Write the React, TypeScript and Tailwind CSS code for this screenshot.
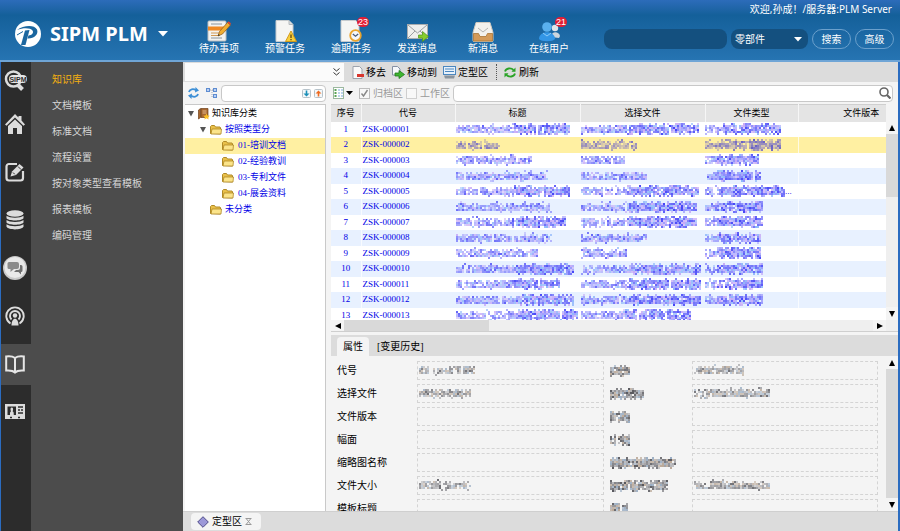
import { useState } from 'react';
import type { ReactNode } from 'react';
import { clsx } from 'clsx';

type Tone = 'blue' | 'violet' | 'gray';

const tones: Record<Tone, string[]> = {
  blue: ['#3c3cf6', '#5454f8', '#6a6afa', '#8686fb', '#a5a2fc', '#c3a4f6', '#86b2fa'],
  violet: ['#5c55c8', '#7a70c4', '#9186c0', '#aa9cb8', '#c4b6b0'],
  gray: ['#4e4e54', '#6c6c72', '#8b8b90', '#a8a8ac', '#b7a594', '#94a8bf'],
};

// Censored text: small blocks of uneven strength, heavier after `dense` (0..1)
function Mosaic({ width, seed, tone = 'blue', dense = 0.5 }: { width: number; seed: number; tone?: Tone; dense?: number }) {
  const colors = tones[tone];
  const cells: ReactNode[] = [];
  let s = seed * 7919 + 17;
  const rand = () => {
    s = (s * 16807) % 2147483647;
    return s / 2147483647;
  };
  rand();
  for (let x = 0; x < width; x += 2) {
    const heavy = x / width >= dense;
    const gap = rand() < (heavy ? 0.03 : 0.08);
    for (let y = 0; y < 12; y += 2) {
      const edge = y === 0 || y === 10;
      const chance = gap ? 0.2 : edge ? (heavy ? 0.4 : 0.06) : heavy ? 0.95 : y === 2 ? 0.55 : 0.9;
      const hit = rand() < chance;
      const pick = Math.floor(rand() * colors.length);
      const strength = (heavy ? 0.6 : 0.45) + rand() * 0.35;
      if (hit) {
        cells.push(<rect key={`${x}-${y}`} x={x} y={y} width="2" height="2" fill={colors[pick]} fillOpacity={strength} />);
      }
    }
  }
  return (
    <svg width={width} height="12" viewBox={`0 0 ${width} 12`} className="block shrink-0" aria-hidden="true">
      {cells}
    </svg>
  );
}

/* ---------- header ---------- */

function Logo() {
  return (
    <svg width="28" height="28" viewBox="0 0 28 28" aria-hidden="true">
      <circle cx="14" cy="14" r="13" fill="#fff" />
      <path d="M3 10C9 5.500 20 4 23 9.500C25 14.500 19.500 19 13.500 18.500L14.500 15.500C18 15.500 20 12.500 18.500 10.500C16.500 7.500 9 7.500 3 10Z" fill="#1b669f" />
      <path d="M11 10.500L15.500 10L11.500 25L7 25Z" fill="#1b669f" />
      <path d="M3 15L9 11.500" stroke="#1b669f" strokeWidth="1" />
    </svg>
  );
}

function TodoIcon() {
  return (
    <svg width="24" height="22" viewBox="0 0 24 22">
      <rect x="1" y="1" width="18" height="20" rx="1" fill="#f3f3f1" stroke="#b9bdc0" />
      <path d="M4 4h11M4 18h11" stroke="#8c969e" />
      <rect x="1" y="6.500" width="18" height="4" fill="#f08a24" />
      <path d="M4 13h10M4 15.500h8" stroke="#d19955" />
      <path d="M11 16l1.500-4.500L20.500 2.500l3 2.500-8 9z" fill="#f0ae32" stroke="#8b5a1d" strokeWidth=".7" />
      <path d="M20.500 2.500l1.200-1.300 2.300 2.200-1 1.600z" fill="#dc4632" />
      <path d="M11 16l.6-2 1.400 1.200z" fill="#333" />
    </svg>
  );
}

function WarnIcon() {
  return (
    <svg width="24" height="22" viewBox="0 0 24 22">
      <path d="M3 .5h13l4 4v17H3z" fill="#f5f5f3" stroke="#c6cbce" />
      <path d="M16 .5v4h4" fill="#d9dcde" stroke="#b5babd" />
      <path d="M18 11l5.500 10.500h-11z" fill="#f8cf3c" stroke="#d29a1c" strokeLinejoin="round" />
      <path d="M18 14.500v3.500M18 19v1.300" stroke="#5c4611" strokeWidth="1.300" />
    </svg>
  );
}

function OverdueIcon() {
  return (
    <svg width="24" height="22" viewBox="0 0 24 22">
      <path d="M2 .5h15l3 4v17H2z" fill="#f5f5f3" stroke="#c6cbce" />
      <circle cx="16.500" cy="15.500" r="5.300" fill="#f4f7fb" stroke="#eba52e" strokeWidth="1.800" />
      <path d="M13.800 14l2.700 2.200 2.700-2.200" fill="none" stroke="#4a5a78" strokeWidth="1.300" />
    </svg>
  );
}

function SendIcon() {
  return (
    <svg width="24" height="22" viewBox="0 0 24 22">
      <rect x="2.500" y="4.500" width="20" height="14" fill="#efefed" stroke="#a9adb0" />
      <path d="M3 5l9.500 8L22 5M3 18l7-7M22 18l-7-7" fill="none" stroke="#9b9fa2" />
      <path d="M13.500 15h4v-3.500l6 5-6 5V18h-4z" fill="#86cc2c" stroke="#4f9416" strokeWidth=".7" />
    </svg>
  );
}

function InboxIcon() {
  return (
    <svg width="24" height="22" viewBox="0 0 24 22">
      <path d="M5 2.500h14l3 10v8a1 1 0 0 1-1 1H3a1 1 0 0 1-1-1v-8z" fill="#f3f1ec" stroke="#cfc9bf" />
      <path d="M2.500 13.500h5l1.500 3h6l1.500-3h5v7.500h-19z" fill="#d49a58" stroke="#ab7636" strokeWidth=".8" />
      <path d="M7 8l5 4 5-4" fill="none" stroke="#b3b3b0" />
    </svg>
  );
}

function UsersIcon() {
  return (
    <svg width="24" height="22" viewBox="0 0 24 22">
      <circle cx="18" cy="8" r="3.200" fill="#dfe5ea" />
      <path d="M14 17c0-6 8-6 9-1l-1 2z" fill="#cdd6de" />
      <circle cx="10" cy="7" r="4.800" fill="#5ab0ee" />
      <path d="M2 19c0-9 16-9 16 0-2 3-14 3-16 0z" fill="#3396e6" />
      <path d="M6 13l4 3 4-3" fill="none" stroke="#8dcbf8" />
    </svg>
  );
}

const actions: { label: string; icon: ReactNode; badge?: number }[] = [
  { label: '待办事项', icon: <TodoIcon /> },
  { label: '预警任务', icon: <WarnIcon /> },
  { label: '逾期任务', icon: <OverdueIcon />, badge: 23 },
  { label: '发送消息', icon: <SendIcon /> },
  { label: '新消息', icon: <InboxIcon /> },
  { label: '在线用户', icon: <UsersIcon />, badge: 21 },
];

function Header() {
  return (
    <header className="flex h-[62px] shrink-0 border-b-2 border-[#6fa5d6] bg-linear-to-b from-[#2c6cba] via-[#14609a] via-25% to-[#2674b2] text-white">
      <div className="flex w-[186px] shrink-0 items-center pt-2 pl-[14px]">
        <Logo />
        <h1 className="pl-2 font-['Noto_Sans',sans-serif] text-[20px] leading-6 font-bold whitespace-nowrap">SIPM PLM</h1>
        <button aria-label="切换系统" className="pl-2.5">
          <svg width="10" height="6" viewBox="0 0 10 6">
            <path d="M0 0h10L5 5.500z" fill="#fff" />
          </svg>
        </button>
      </div>
      <nav className="flex pt-5">
        {actions.map((a) => (
          <button key={a.label} className="flex w-[66px] flex-col items-center">
            <span className="relative">
              {a.icon}
              {a.badge && (
                <span className="absolute -top-[3px] -right-[6px] flex h-[10px] w-3 items-center justify-center rounded-full bg-[#e21f35] font-['Liberation_Sans',sans-serif] text-[9px] leading-none">
                  {a.badge}
                </span>
              )}
            </span>
            <span className="text-[10px] leading-[14px]">{a.label}</span>
          </button>
        ))}
      </nav>
      <div className="ml-auto flex flex-col items-end pr-[6px]">
        <p className="pt-px pr-0.5 font-['Noto_Sans','Noto_Sans_CJK_SC',sans-serif] text-[10px] leading-4">欢迎,孙成！/服务器:PLM Server</p>
        <div className="flex items-center gap-1 pt-3 text-[10px]">
          <input aria-label="搜索内容" className="h-5 w-[123px] rounded-lg bg-[#14507f] px-2 outline-none" />
          <span className="relative flex">
            <select aria-label="搜索类型" className="h-5 w-[77px] appearance-none rounded-lg bg-[#14507f] pl-1 outline-none">
              <option>零部件</option>
            </select>
            <svg width="8" height="5" viewBox="0 0 8 5" className="pointer-events-none absolute top-2 right-[6px]">
              <path d="M0 0h8L4 4.500z" fill="#fff" />
            </svg>
          </span>
          <button className="h-5 w-[39px] rounded-full border border-[#6ba0cc]">搜索</button>
          <button className="h-5 w-[39px] rounded-full border border-[#6ba0cc]">高级</button>
        </div>
      </div>
    </header>
  );
}

/* ---------- left rail ---------- */

function SearchLogoIcon() {
  return (
    <svg width="24" height="22" viewBox="0 0 24 22">
      <circle cx="9.500" cy="9" r="7.500" fill="none" stroke="#dcdcdc" strokeWidth="2.500" />
      <path d="M13.500 14.500l5 5" stroke="#dcdcdc" strokeWidth="4" />
      <rect x="5" y="5" width="18" height="8" rx="4" fill="#e6e6e6" />
      <text x="14" y="11.500" textAnchor="middle" fontSize="7" fontWeight="bold" fill="#2c2c2c" fontFamily="Liberation Sans, sans-serif">
        SIPM
      </text>
    </svg>
  );
}

const railIcons: { label: string; icon: ReactNode }[] = [
  {
    label: '首页',
    icon: (
      <svg width="20" height="20" viewBox="0 0 20 20" fill="#dcdcdc">
        <path d="M10 0l3.500 3.500V2h3v4.500L20 10.500l-1.500 1.200L10 3.500 1.500 11.700 0 10.500z" />
        <path d="M10 5.500l7 6.500v8h-5v-6H8v6H3v-8z" />
      </svg>
    ),
  },
  {
    label: '编辑',
    icon: (
      <svg width="20" height="20" viewBox="0 0 20 20" fill="none">
        <path d="M12 2H4a2.500 2.500 0 0 0-2.500 2.500v11.500A2.500 2.500 0 0 0 4 18.500h11.500a2.500 2.500 0 0 0 2.500-2.500V9" stroke="#dcdcdc" strokeWidth="2.200" />
        <path d="M5.500 14.500l1.500-5L14.500 2l4 3.500L11 13z" fill="#dcdcdc" />
        <path d="M8 10.500l1.800 1.800M13 4.500l3 3" stroke="#2c2c2c" />
      </svg>
    ),
  },
  {
    label: '数据库',
    icon: (
      <svg width="18" height="20" viewBox="0 0 18 20" fill="#dcdcdc">
        <ellipse cx="9" cy="3.500" rx="8.500" ry="3.200" />
        <path d="M.5 5.700c3 2.600 14 2.600 17 0v2.500c-2 3-15 3-17 0zM.5 10c3 2.600 14 2.600 17 0v2.500c-2 3-15 3-17 0zM.5 14.300c3 2.600 14 2.600 17 0v2.500c-2 3.500-15 3.500-17 0z" />
      </svg>
    ),
  },
  {
    label: '消息',
    icon: (
      <svg width="24" height="24" viewBox="0 0 24 24">
        <circle cx="12" cy="12" r="12" fill="#c9c9c9" />
        <circle cx="12" cy="11.500" r="10.500" fill="#e9e9e9" />
        <path d="M6 6h8a2 2 0 0 1 2 2v3a2 2 0 0 1-2 2h-3l-3.500 3v-3H6a1.500 1.500 0 0 1-1.500-1.500v-4A1.500 1.500 0 0 1 6 6z" fill="#8b8b8b" />
        <path d="M17 9h1a1.500 1.500 0 0 1 1.500 1.500v4A1.500 1.500 0 0 1 18 16v2.500L15.500 16H11l2-2h2a2 2 0 0 0 2-2z" fill="#6e6e6e" />
      </svg>
    ),
  },
  {
    label: '广播',
    icon: (
      <svg width="20" height="20" viewBox="0 0 20 20" fill="none" stroke="#dcdcdc" strokeWidth="1.900">
        <path d="M5.500 17.500a8.700 8.700 0 1 1 9 0" />
        <path d="M6.500 13.500a5 5 0 1 1 7 0" />
        <circle cx="10" cy="9.500" r="2.200" fill="#dcdcdc" stroke="none" />
        <path d="M6.500 19.500c0-9 7-9 7 0z" fill="#dcdcdc" stroke="none" />
      </svg>
    ),
  },
  {
    label: '知识库',
    icon: (
      <svg width="20" height="19" viewBox="0 0 20 19" fill="none" stroke="#e6e6e6" strokeWidth="2">
        <path d="M1.200 1.500C5 1 8 1.500 10 3c2-1.500 5-2 8.800-1.500v14c-4-.3-7 .2-8.800 2-1.800-1.800-4.800-2.300-8.800-2zM10 3v14" />
      </svg>
    ),
  },
  {
    label: '证件',
    icon: (
      <svg width="20" height="16" viewBox="0 0 20 16">
        <rect width="20" height="15" fill="#dcdcdc" />
        <rect x="2.500" y="2.500" width="8.500" height="8.500" fill="#2c2c2c" />
        <path d="M5 11c0-3 .2-3 1-3.500C5 5 5.500 3.500 6.800 3.500S8.500 5 7.700 7.500C8.500 8 8.800 8 8.800 11z" fill="#dcdcdc" />
        <path d="M13 3h5M13 6h2M16 6h2M13 9h5M5 13.500h2M13 13.500h2" stroke="#2c2c2c" strokeWidth="1.300" />
      </svg>
    ),
  },
];

const menu = ['知识库', '文档模板', '标准文档', '流程设置', '按对象类型查看模板', '报表模板', '编码管理'];

function Sidebar() {
  return (
    <>
      <nav className="flex w-[31px] shrink-0 flex-col border-l border-[#2b6cc0] bg-[#2c2c2c]">
        <button aria-label="SIPM" className="flex h-[38px] items-center justify-center">
          <SearchLogoIcon />
        </button>
        {railIcons.map((item) => (
          <div key={item.label} className="flex h-12 items-center">
            <button
              aria-label={item.label}
              className={clsx('flex h-[41px] w-full items-center justify-center pr-0.5', item.label === '知识库' && 'bg-[#4c4c4c]')}
            >
              {item.icon}
            </button>
          </div>
        ))}
      </nav>
      <nav className="w-[152px] shrink-0 bg-[#4c4c4c] pt-1 pl-[21px] text-[10px]">
        {menu.map((m, i) => (
          <a key={m} href="#" className={clsx('flex h-[26px] items-center', i === 0 ? 'text-[#f5b010]' : 'text-[#d6d6d6]')}>
            {m}
          </a>
        ))}
      </nav>
    </>
  );
}

/* ---------- toolbars ---------- */

function Toolbar() {
  return (
    <div className="flex h-5 shrink-0 items-center bg-[#dcdcdc] text-[10px]">
      <button aria-label="选择分类" className="ml-0.5 flex h-[18px] w-[159px] items-center justify-end bg-[#fbfbfb] pr-1">
        <svg width="7" height="8" viewBox="0 0 7 8" fill="none" stroke="#333">
          <path d="M.5 .5l3 2.500 3-2.500M.5 4.500l3 2.500 3-2.500" />
        </svg>
      </button>
      <button className="flex items-center gap-0.5 pl-2">
        <svg width="12" height="13" viewBox="0 0 12 13">
          <path d="M1 .5h6.500L10 3v9.500H1z" fill="#fafafa" stroke="#9da3ad" />
          <rect x="5" y="8" width="7" height="3" fill="#d8362e" />
        </svg>
        移去
      </button>
      <button className="flex items-center gap-0.5 pl-[6px]">
        <svg width="13" height="13" viewBox="0 0 13 13">
          <path d="M.5 .5h5L8 3v6H.5z" fill="#f6f8fb" stroke="#8590a5" />
          <path d="M3 7h4V4.500L12.500 8.500 7 12.500V10H3z" fill="#3fb52f" stroke="#1e7a1a" strokeWidth=".8" />
        </svg>
        移动到
      </button>
      <button className="flex items-center gap-0.5 pl-[6px]">
        <svg width="13" height="13" viewBox="0 0 13 13">
          <rect x=".5" y=".5" width="12" height="8" fill="#e7f1fb" stroke="#4b87c0" />
          <path d="M2 3h9M2 5.500h9" stroke="#4b87c0" />
          <path d="M1 9.500h11l-1 3H2z" fill="#8a949e" />
        </svg>
        定型区
      </button>
      <span className="ml-2 h-4 border-l border-dotted border-[#555]" />
      <button className="flex items-center gap-[3px] pl-[7px]">
        <svg width="12" height="11" viewBox="0 0 12 11" fill="none" stroke="#2aa327" strokeWidth="1.800">
          <path d="M1 4.500C2 1 7 .5 9.500 3M11 6.500C10 10 5 10.500 2.500 8" />
          <path d="M11.500 .5v4.300h-4zM.5 10.500V6.200h4z" fill="#2aa327" stroke="none" />
        </svg>
        刷新
      </button>
    </div>
  );
}

function ArrowBox({ color, up }: { color: string; up?: boolean }) {
  return (
    <svg width="9" height="9" viewBox="0 0 9 9">
      <rect x=".5" y=".5" width="8" height="8" rx="1" fill="#f4f8fa" stroke="#b7c3ca" />
      <path d={up ? 'M4.500 1.500L7.500 4.500H5.300V7.500H3.700V4.500H1.500z' : 'M4.500 7.500L7.500 4.500H5.300V1.500H3.700V4.500H1.500z'} fill={color} />
    </svg>
  );
}

function TreeSearch() {
  return (
    <div className="flex h-[22px] shrink-0 items-center pl-[3px]">
      <button aria-label="刷新分类">
        <svg width="11" height="12" viewBox="0 0 11 12" fill="none" stroke="#3d8fd6" strokeWidth="1.800">
          <path d="M1 5C1.500 2 5.500 1.500 8 3.200M10 7C9.500 10 5.500 10.500 3 8.800" />
          <path d="M7.500 0L11 3.500 7 5.500zM3.500 12L0 8.500 4 6.500z" fill="#3d8fd6" stroke="none" />
        </svg>
      </button>
      <button aria-label="展开层级" className="pl-[7px]">
        <svg width="12" height="11" viewBox="0 0 12 11" fill="#b9d0f5" stroke="#5e8cd0">
          <path d="M4 2h3M6 2v7h2" stroke="#a0a8b8" fill="none" strokeDasharray="1 1" />
          <rect x=".5" y=".5" width="3" height="3" />
          <rect x="7.500" y=".5" width="3" height="3" />
          <rect x="7.500" y="6.500" width="3" height="3" />
        </svg>
      </button>
      <div className="ml-[3px] flex h-[17px] min-w-0 flex-1 items-center gap-[3px] rounded-sm border border-[#c8c8c8] bg-white pr-0.5">
        <input aria-label="分类搜索" className="h-full min-w-0 flex-1 px-1 text-[9px] outline-none" />
        <button aria-label="向下查找">
          <ArrowBox color="#1b8fb8" />
        </button>
        <button aria-label="向上查找">
          <ArrowBox color="#ee6a20" up />
        </button>
      </div>
    </div>
  );
}

function ListSearch() {
  return (
    <div className="flex h-[22px] shrink-0 items-center pr-[5px] pl-0.5 text-[10px] text-[#9a9a9a]">
      <button aria-label="视图" className="flex items-center gap-0.5">
        <svg width="11" height="12" viewBox="0 0 11 12">
          <rect x=".5" y=".5" width="10" height="11" fill="#fff" stroke="#9cb8a0" />
          <path d="M2.500 2v8" stroke="#5aa456" strokeWidth="2" strokeDasharray="2 1" />
          <path d="M5 3h5M5 6h5M5 9h5" stroke="#79a9d8" strokeDasharray="2 1" />
        </svg>
        <svg width="7" height="4" viewBox="0 0 7 4">
          <path d="M0 0h7L3.500 4z" />
        </svg>
      </button>
      <label className="flex items-center gap-[3px] pl-[6px]">
        <span className="relative flex">
          <input type="checkbox" defaultChecked className="peer size-[11px] appearance-none border border-[#bdbdbd] bg-[#f8f8f8]" />
          <svg width="9" height="9" viewBox="0 0 9 9" className="pointer-events-none absolute top-px left-px hidden peer-checked:block">
            <path d="M1.500 4.500l2 2.500 4-6" fill="none" stroke="#888" strokeWidth="1.400" />
          </svg>
        </span>
        归档区
      </label>
      <label className="flex items-center gap-[3px] pl-[3px]">
        <input type="checkbox" className="size-[11px] appearance-none border border-[#cfcfcf] bg-[#f8f8f8]" />
        工作区
      </label>
      <div className="ml-[3px] flex h-[17px] min-w-0 flex-1 items-center rounded-sm border border-[#c8c8c8] bg-white pr-px">
        <input aria-label="列表搜索" className="h-full min-w-0 flex-1 px-1 text-black outline-none" />
        <button aria-label="查找">
          <svg width="12" height="12" viewBox="0 0 12 12" fill="none" stroke="#666">
            <circle cx="5" cy="5" r="4" strokeWidth="1.600" />
            <path d="M8 8l3.500 3.500" strokeWidth="2.200" />
          </svg>
        </button>
      </div>
    </div>
  );
}

/* ---------- tree ---------- */

function Folder() {
  return (
    <svg width="12" height="10" viewBox="0 0 12 10">
      <path d="M.5 8.500V1.500l1-1h3l1 1.500h4.500l.5 1v6z" fill="#e9c04a" stroke="#b08a28" />
      <path d="M1 9l1-5h9.500L11 9z" fill="#fbe48a" stroke="#a67c17" strokeWidth=".7" />
    </svg>
  );
}

function Caret() {
  return (
    <svg width="6" height="6" viewBox="0 0 6 6">
      <path d="M0 0h6L3 5.500z" fill="#555" />
    </svg>
  );
}

const leaves = ['01-培训文档', '02-经验教训', '03-专利文件', '04-展会资料'];

function Tree() {
  const [selected, setSelected] = useState(leaves[0]);

  return (
    <div className="min-h-0 flex-1 overflow-hidden border-t border-r border-[#c9c9c9] bg-white pt-px text-[9px] whitespace-nowrap text-[#0000e6]">
      <button className="flex h-4 w-full items-center pl-[3px] text-black">
        <Caret />
        <svg width="12" height="12" viewBox="0 0 12 12" className="mr-0.5 ml-1">
          <path d="M.5 2l2-1.500v9L.5 11zM3 .5h7v9H3z" fill="#a8672f" stroke="#6e3f18" strokeWidth=".7" />
          <path d="M4.500 3h4M4.500 5h4" stroke="#e3b98c" />
          <path d="M8.500 5.500l1 2 2.300.2-1.700 1.500.6 2.300-2.200-1.200-2.100 1.200.5-2.300-1.700-1.500 2.300-.2z" fill="#fbbf24" />
        </svg>
        知识库分类
      </button>
      <button className="flex h-4 w-full items-center pl-[15px]">
        <Caret />
        <span className="mr-[3px] ml-1">
          <Folder />
        </span>
        按照类型分
      </button>
      {leaves.map((leaf) => (
        <button
          key={leaf}
          onClick={() => setSelected(leaf)}
          className={clsx('flex h-4 w-full items-center gap-1 pl-[37px]', leaf === selected && 'bg-[#fff0a2]')}
        >
          <Folder />
          {leaf}
        </button>
      ))}
      <button className="flex h-4 w-full items-center gap-[3px] pl-[25px]">
        <Folder />
        未分类
      </button>
    </div>
  );
}

/* ---------- list ---------- */

// widths of the three censored columns: title, file, type
const rows: [number, number, number][] = [
  [114, 118, 76],
  [44, 56, 76],
  [76, 44, 56],
  [92, 66, 56],
  [114, 118, 80],
  [96, 116, 58],
  [110, 116, 58],
  [96, 66, 56],
  [82, 46, 56],
  [118, 120, 58],
  [104, 120, 58],
  [118, 120, 58],
  [122, 110, 0],
];

const columns = ['序号', '代号', '标题', '选择文件', '文件类型', '文件版本'];

function Arrow({ dir }: { dir: 'up' | 'down' | 'left' | 'right' }) {
  const d = { up: 'M0 6h6L3 0z', down: 'M0 0h6L3 6z', left: 'M6 0v6L0 3z', right: 'M0 0v6l6-3z' }[dir];
  return (
    <svg width="6" height="6" viewBox="0 0 6 6">
      <path d={d} />
    </svg>
  );
}

function VScroll({ thumb }: { thumb: string }) {
  return (
    <div className="flex w-3 shrink-0 flex-col bg-[#efefef]">
      <button aria-label="向上滚动" className="flex h-[13px] items-center justify-center bg-[#f4f4f4]">
        <Arrow dir="up" />
      </button>
      <div className="min-h-0 flex-1">
        <div className={clsx('bg-[#d9d9d9]', thumb)} />
      </div>
      <button aria-label="向下滚动" className="flex h-[13px] items-center justify-center bg-[#f4f4f4]">
        <Arrow dir="down" />
      </button>
    </div>
  );
}

function DocumentList() {
  const [active, setActive] = useState(1);

  return (
    <section className="flex h-[228px] shrink-0 flex-col border-b border-[#cfcfcf]">
      <div className="flex min-h-0 flex-1">
        <div className="min-w-0 flex-1 overflow-hidden bg-white">
          <table className="h-[219px] w-full min-w-[594px] table-fixed text-[9px] leading-[15px]">
            <colgroup>
              <col className="w-[30px]" />
              <col className="w-[94px]" />
              <col className="w-[125px]" />
              <col className="w-[125px]" />
              <col className="w-[93px]" />
              <col />
            </colgroup>
            <thead>
              <tr className="h-[17px] bg-[#e4e4e4]">
                {columns.map((c) => (
                  <th key={c} className="h-[17px] border-t border-r border-t-[#cfcfcf] border-r-[#f6f6f6] p-0 font-normal">
                    {c}
                  </th>
                ))}
              </tr>
            </thead>
            <tbody className="text-[#0000e6]">
              {rows.map(([title, file, type], i) => (
                <tr
                  key={i}
                  onClick={() => setActive(i)}
                  className={clsx(i === active ? 'bg-[#fff0a2]' : i % 2 ? 'bg-[#e8f1ff]' : 'bg-white')}
                >
                  <td className="border-r border-white/70 p-0 text-center">{i + 1}</td>
                  <td className="p-0 pl-px">ZSK-{String(i + 1).padStart(6, '0')}</td>
                  <td className="p-0 pl-px">
                    <Mosaic width={title} seed={i * 3 + 1} tone={i === 1 ? 'violet' : 'blue'} dense={title > 100 ? 0.5 : 1} />
                  </td>
                  <td className="p-0 pl-px">
                    <Mosaic width={file} seed={i * 3 + 2} tone={i === 1 ? 'violet' : 'blue'} dense={file > 100 ? 0.4 : 1} />
                  </td>
                  <td className="border-r border-white/70 p-0">
                    {type > 0 && (
                      <span className="flex items-center">
                        <Mosaic width={type} seed={i * 3 + 3} tone={i === 1 ? 'violet' : 'blue'} dense={0.2} />
                        {i === 4 && '...'}
                      </span>
                    )}
                  </td>
                  <td className="p-0" />
                </tr>
              ))}
            </tbody>
          </table>
        </div>
        <div className="flex pt-[17px]">
          <VScroll thumb="h-[63px]" />
        </div>
      </div>
      <div className="flex h-[11px] shrink-0 items-center bg-[#efefef] pr-3">
        <button aria-label="向左滚动" className="flex h-full w-[13px] items-center justify-center bg-[#f4f4f4]">
          <Arrow dir="left" />
        </button>
        <div className="h-full flex-1">
          <div className="h-full w-[145px] bg-[#d9d9d9]" />
        </div>
        <button aria-label="向右滚动" className="flex h-full w-[13px] items-center justify-center bg-[#f4f4f4]">
          <Arrow dir="right" />
        </button>
      </div>
    </section>
  );
}

/* ---------- properties ---------- */

// value / other label / other value are censored, given as widths
const fields: { label: string; value: number; other: number; otherValue: number }[] = [
  { label: '代号', value: 56, other: 20, otherValue: 50 },
  { label: '选择文件', value: 52, other: 34, otherValue: 76 },
  { label: '文件版本', value: 0, other: 20, otherValue: 0 },
  { label: '幅面', value: 0, other: 20, otherValue: 0 },
  { label: '缩略图名称', value: 0, other: 66, otherValue: 0 },
  { label: '文件大小', value: 52, other: 58, otherValue: 76 },
  { label: '模板标题', value: 0, other: 18, otherValue: 0 },
];

function CensoredField({ id, width, seed }: { id: string; width: number; seed: number }) {
  return (
    <div className="relative min-w-0">
      <input id={id} readOnly className="block h-[19px] w-full border border-dashed border-[#d4d4d4] bg-[#f4f4f4] outline-none" />
      {width > 0 && (
        <span className="pointer-events-none absolute top-[3px] left-0.5">
          <Mosaic width={width} seed={seed} tone="gray" dense={1} />
        </span>
      )}
    </div>
  );
}

function Properties() {
  return (
    <section className="mt-[3px] flex min-h-0 flex-1 flex-col">
      <div className="flex h-[21px] shrink-0 items-end bg-[#dcdcdc] pl-[6px] text-[10px]">
        <button className="h-[19px] w-8 rounded-t-sm bg-[#f4f4f4]">属性</button>
        <button className="h-[19px] pl-2">[变更历史]</button>
      </div>
      <div className="flex min-h-0 flex-1">
        <form className="min-w-0 flex-1 overflow-hidden pt-[3px] pr-2 pl-[6px] text-[10px]">
          {fields.map((f, i) => (
            <div key={f.label} className="grid h-[23px] grid-cols-[80px_1fr_88px_1fr] items-center">
              <label htmlFor={`field-${i}`}>{f.label}</label>
              <CensoredField id={`field-${i}`} width={f.value} seed={i + 60} />
              <label htmlFor={`other-${i}`} aria-label={`字段${i + 1}`} className="pl-[6px]">
                <Mosaic width={f.other} seed={i + 80} tone="gray" dense={0} />
              </label>
              <CensoredField id={`other-${i}`} width={f.otherValue} seed={i + 100} />
            </div>
          ))}
        </form>
        <VScroll thumb="h-full" />
      </div>
    </section>
  );
}

function BottomTabs() {
  return (
    <div className="flex h-5 shrink-0 items-center border-t border-[#cfcfcf] bg-[#dcdcdc] pl-2 text-[10px]">
      <div className="flex h-[17px] w-[70px] items-center rounded-sm bg-[#f4f4f4] pl-[6px]">
        <button className="flex items-center gap-[3px]">
          <svg width="12" height="12" viewBox="0 0 12 12">
            <path d="M6 .7L11.300 6 6 11.300.7 6z" fill="#9c98d8" stroke="#4f4b88" />
          </svg>
          定型区
        </button>
        <button aria-label="关闭" className="pl-[3px]">
          <svg width="7" height="7" viewBox="0 0 7 7" stroke="#999" fill="none">
            <path d="M.5 .5h6M.5 6.500h6M1.500 1l4 5M5.500 1l-4 5" />
          </svg>
        </button>
      </div>
    </div>
  );
}

export default function App() {
  return (
    <div className="flex h-screen flex-col overflow-hidden bg-[#f4f4f4] font-['Liberation_Serif','Noto_Sans_CJK_SC',serif] text-black">
      <Header />
      <div className="flex min-h-0 flex-1 border-r-2 border-[#2b6cc0]">
        <Sidebar />
        <main className="flex min-w-0 flex-1 flex-col">
          <Toolbar />
          <div className="flex min-h-0 flex-1 gap-[5px] pl-0.5">
            <div className="flex w-[141px] shrink-0 flex-col">
              <TreeSearch />
              <Tree />
            </div>
            <div className="flex min-w-0 flex-1 flex-col">
              <ListSearch />
              <DocumentList />
              <Properties />
            </div>
          </div>
          <BottomTabs />
        </main>
      </div>
    </div>
  );
}
